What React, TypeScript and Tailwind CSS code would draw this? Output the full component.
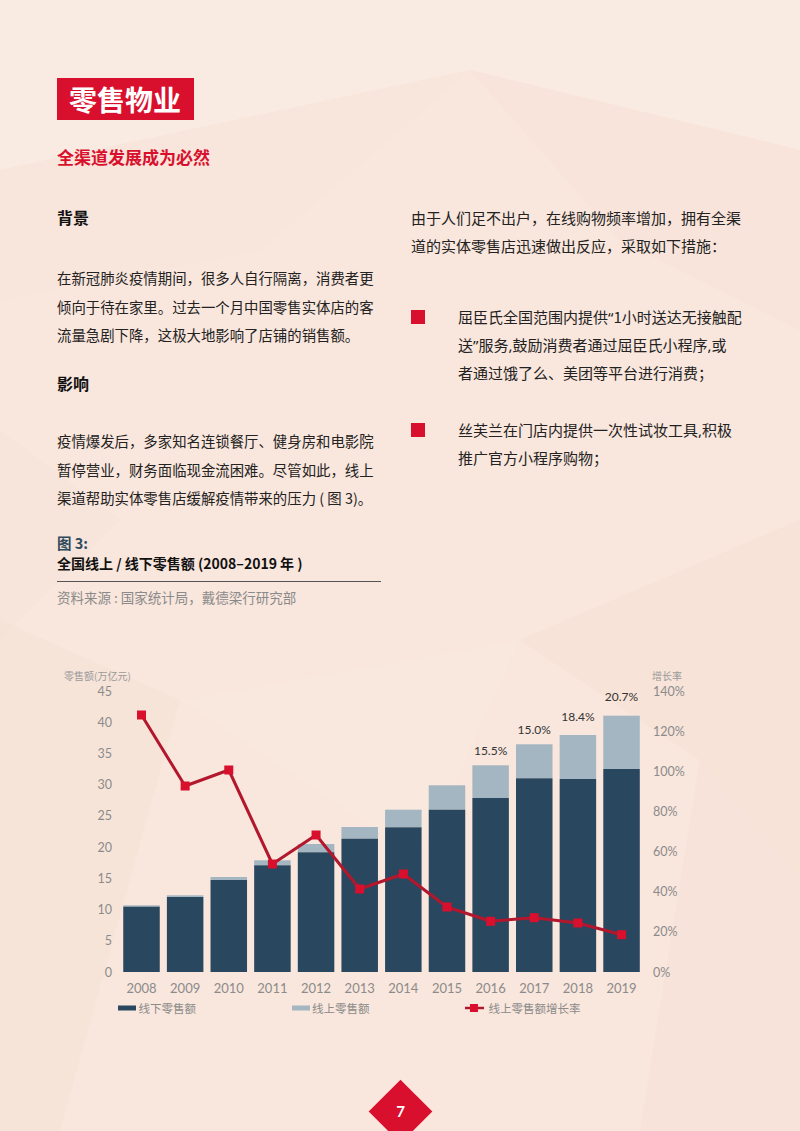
import React from "react";

const navyTop = [906.7, 897, 880, 865.3, 852.3, 838.7, 827.3, 809.7, 798, 778.3, 779, 769];
const totalTop = [905.3, 895.3, 877, 860.3, 844, 827, 809.7, 785.3, 765.3, 744.3, 735, 715.7];
const lineY = [715, 786, 770, 864, 835, 889, 874, 907, 921.3, 917.7, 923, 934.7];
const years = [2008, 2009, 2010, 2011, 2012, 2013, 2014, 2015, 2016, 2017, 2018, 2019];
const topLabels: Record<number, [string, number]> = {
  8: ["15.5%", 750.7],
  9: ["15.0%", 729.7],
  10: ["18.4%", 716],
  11: ["20.7%", 696],
};

const cx = (i: number) => 141.5 + i * 43.64;
const BASE = 972;
const BW = 36.5;

function Chart() {
  const pts = lineY.map((y, i) => `${cx(i)},${y}`).join(" ");
  const axisFont = "Lato, 'Noto Sans', sans-serif";
  const cjkFont = "'Noto Sans CJK SC', sans-serif";
  return (
    <svg width={800} height={380} viewBox="0 650 800 380" className="block">
      <text x={64} y={675} fontSize={10} fill="#9a9a9a" fontFamily={cjkFont} dominantBaseline="central">
        零售额(万亿元)
      </text>
      <text x={652} y={675} fontSize={10} fill="#9a9a9a" fontFamily={cjkFont} dominantBaseline="central">
        增长率
      </text>
      {Array.from({ length: 10 }, (_, k) => k * 5).map((v) => (
        <text
          key={v}
          x={112}
          y={BASE - v * 6.244}
          fontSize={12.5}
          fill="#8b8b8b"
          textAnchor="end"
          dominantBaseline="central"
          fontFamily={axisFont}
        >
          {v}
        </text>
      ))}
      {Array.from({ length: 8 }, (_, k) => k * 20).map((p) => (
        <text
          key={p}
          x={653}
          y={BASE - p * 2.007}
          fontSize={12.5}
          fill="#8b8b8b"
          dominantBaseline="central"
          fontFamily={axisFont}
        >
          {p}%
        </text>
      ))}
      {years.map((yr, i) => (
        <g key={yr}>
          <rect x={cx(i) - BW / 2} y={totalTop[i]} width={BW} height={navyTop[i] - totalTop[i]} fill="#a3b6c2" />
          <rect x={cx(i) - BW / 2} y={navyTop[i]} width={BW} height={BASE - navyTop[i]} fill="#29475f" />
          <text
            x={cx(i)}
            y={987.5}
            fontSize={13}
            fill="#8b8b8b"
            textAnchor="middle"
            dominantBaseline="central"
            fontFamily={axisFont}
          >
            {yr}
          </text>
        </g>
      ))}
      {Object.entries(topLabels).map(([k, [label, y]]) => (
        <text
          key={k}
          x={cx(Number(k))}
          y={y}
          fontSize={12}
          fill="#333333"
          textAnchor="middle"
          dominantBaseline="central"
          fontFamily={axisFont}
        >
          {label}
        </text>
      ))}
      <polyline points={pts} fill="none" stroke="#b3172d" strokeWidth={3} strokeLinejoin="round" />
      {lineY.map((y, i) => (
        <rect key={i} x={cx(i) - 4.5} y={y - 4.5} width={9} height={9} fill="#d8102e" />
      ))}
      <rect x={118} y={1005.5} width={18} height={5} fill="#29475f" />
      <text x={138.5} y={1008} fontSize={11.5} fill="#8b8b8b" dominantBaseline="central" fontFamily={cjkFont}>
        线下零售额
      </text>
      <rect x={292} y={1005.5} width={18} height={5} fill="#a3b6c2" />
      <text x={312} y={1008} fontSize={11.5} fill="#8b8b8b" dominantBaseline="central" fontFamily={cjkFont}>
        线上零售额
      </text>
      <line x1={465} y1={1008} x2={484} y2={1008} stroke="#b3172d" strokeWidth={2.5} />
      <rect x={470} y={1004} width={8} height={8} fill="#d8102e" />
      <text x={488.5} y={1008} fontSize={11.5} fill="#8b8b8b" dominantBaseline="central" fontFamily={cjkFont}>
        线上零售额增长率
      </text>
    </svg>
  );
}

function Background() {
  return (
    <svg className="absolute inset-0 pointer-events-none" width={800} height={1131} viewBox="0 0 800 1131">
      <rect width={800} height={1131} fill="#f9e6dc" />
      <polygon points="0,0 800,0 800,150 470,70 0,170" fill="#fbece4" opacity={0.7} />
      <polygon points="470,70 800,150 800,330 620,240" fill="#f7e2d7" opacity={0.5} />
      <polygon points="0,170 470,70 260,250 0,300" fill="#f8e4d9" opacity={0.4} />
      <polygon points="520,640 800,520 800,880 700,760" fill="#f5dfd4" opacity={0.5} />
      <polygon points="0,620 180,700 60,1131 0,1131" fill="#f6e1d6" opacity={0.5} />
      <polygon points="180,700 520,640 420,860" fill="#fae9e0" opacity={0.5} />
      <polygon points="700,760 800,880 800,1131 640,1131" fill="#f6e0d5" opacity={0.5} />
      <polygon points="0,430 120,520 0,640" fill="#f6e1d6" opacity={0.4} />
    </svg>
  );
}

const Q = ({ c }: { c: string }) => <span style={{ fontFamily: "'Noto Sans', sans-serif" }}>{c}</span>;

export default function App() {
  const cjk = { fontFamily: "'Noto Sans CJK SC', 'Noto Sans', sans-serif" };
  return (
    <div className="relative w-[800px] h-[1131px] overflow-hidden bg-[#f9e6dc] text-[#222]" style={cjk}>
      <Background />
      <div className="relative flex flex-col">
        <div className="pl-[57px] pt-[78px]">
          <div className="h-[42px] w-[137px] bg-[#d8102e] pl-[12px] text-[28px] font-bold leading-[42px] text-white">
            零售物业
          </div>
          <div className="mt-[25px] text-[17px] font-bold leading-[24px] text-[#d8102e]">全渠道发展成为必然</div>
          <div className="mt-[35px] flex gap-[30px]">
            <div className="flex w-[324px] flex-col">
              <div className="text-[16px] font-bold leading-[27px] text-[#111]">背景</div>
              <div className="mt-[33px] whitespace-nowrap text-[14.4px] leading-[28.5px]">
                <div>在新冠肺炎疫情期间，很多人自行隔离，消费者更</div>
                <div>倾向于待在家里。过去一个月中国零售实体店的客</div>
                <div>流量急剧下降，这极大地影响了店铺的销售额。</div>
              </div>
              <div className="mt-[20px] text-[16px] font-bold leading-[27px] text-[#111]">影响</div>
              <div className="mt-[30.5px] whitespace-nowrap text-[14.4px] leading-[28.5px]">
                <div>疫情爆发后，多家知名连锁餐厅、健身房和电影院</div>
                <div>暂停营业，财务面临现金流困难。尽管如此，线上</div>
                <div>渠道帮助实体零售店缓解疫情带来的压力 ( 图 3)。</div>
              </div>
              <div className="mt-[20px] text-[14.5px] font-bold leading-[20px] text-[#2e4a5c]">图 3:</div>
              <div className="whitespace-nowrap text-[14px] font-bold leading-[20px] text-[#111]">
                全国线上 / 线下零售额 (2008–2019 年 )
              </div>
              <div className="mt-[8px] h-px w-[324px] bg-[#555]" />
              <div className="mt-[5px] whitespace-nowrap text-[13.5px] leading-[20px] text-[#8a8a8a]">
                资料来源 : 国家统计局，戴德梁行研究部
              </div>
            </div>
            <div className="flex w-[345px] flex-col whitespace-nowrap text-[15px] leading-[28px]">
              <div>
                <div>由于人们足不出户，在线购物频率增加，拥有全渠</div>
                <div>道的实体零售店迅速做出反应，采取如下措施：</div>
              </div>
              <div className="mt-[43px] flex">
                <div className="mt-[7px] h-[14px] w-[14px] shrink-0 bg-[#d8102e]" />
                <div className="ml-[33px]">
                  <div>
                    屈臣氏全国范围内提供<Q c="“" />1小时送达无接触配
                  </div>
                  <div>
                    送<Q c="”" />服务<Q c="," />鼓励消费者通过屈臣氏小程序<Q c="," />或
                  </div>
                  <div>者通过饿了么、美团等平台进行消费；</div>
                </div>
              </div>
              <div className="mt-[29px] flex">
                <div className="mt-[7px] h-[14px] w-[14px] shrink-0 bg-[#d8102e]" />
                <div className="ml-[33px]">
                  <div>
                    丝芙兰在门店内提供一次性试妆工具<Q c="," />积极
                  </div>
                  <div>推广官方小程序购物；</div>
                </div>
              </div>
            </div>
          </div>
        </div>
        <div className="mt-[43px]">
          <Chart />
        </div>
        <div className="mt-[59px] flex justify-center">
          <div className="flex h-[45px] w-[45px] rotate-45 items-center justify-center bg-[#d8102e]">
            <span className="-rotate-45 text-[15px] font-bold text-white" style={{ fontFamily: "Lato, sans-serif" }}>
              7
            </span>
          </div>
        </div>
      </div>
    </div>
  );
}
